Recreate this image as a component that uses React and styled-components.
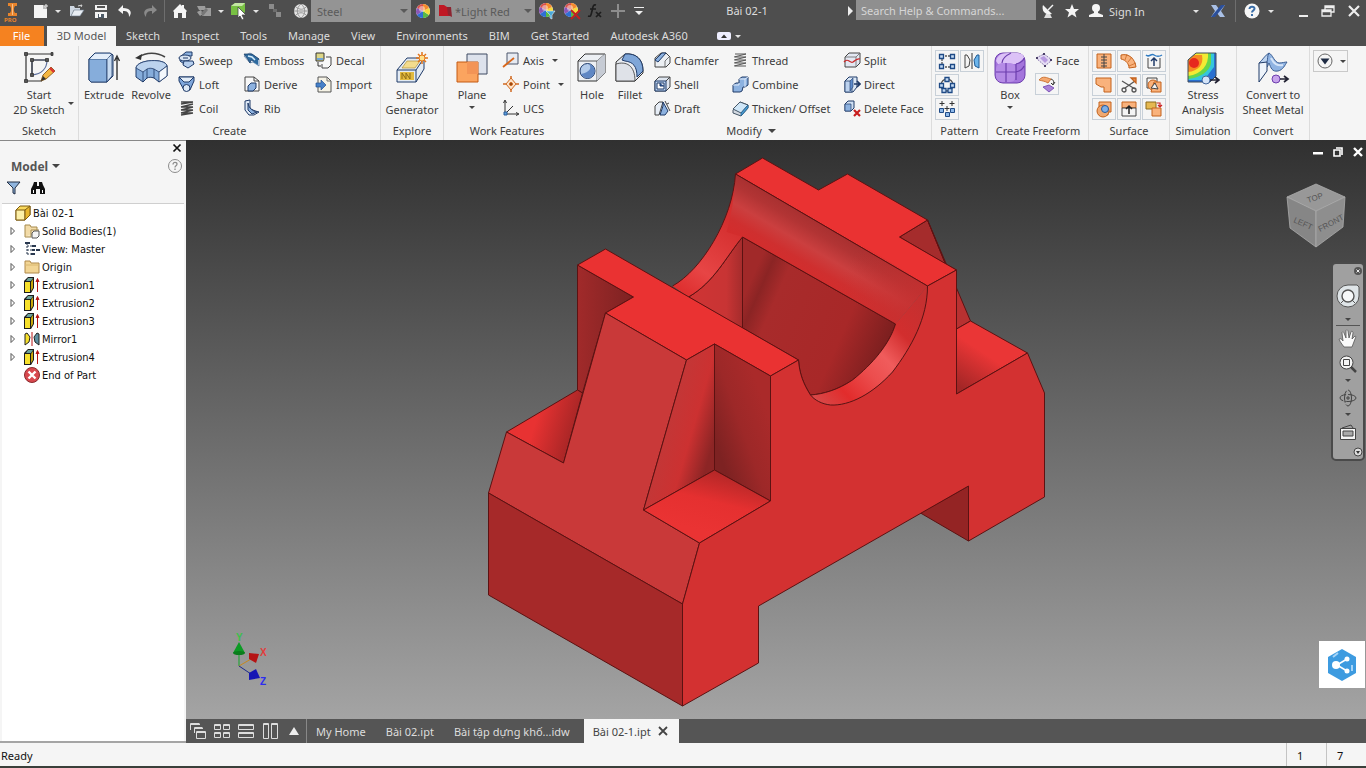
import React from 'react'
import styled, { createGlobalStyle } from 'styled-components'

const GlobalStyle = createGlobalStyle`
  * { box-sizing: border-box; }
  body {
    margin: 0;
    background: #f5f5f5;
    color: #3c3c3c;
    font-family: 'Noto Sans', sans-serif;
    font-size: 11px;
  }
  button, select, input { font: inherit; color: inherit; }
  button { padding: 0; border: 0; background: none; }
  svg { display: block; flex: none; }
  ul { margin: 0; padding: 0; list-style: none; }
`

const navy = '#1f3a68'
const blue = '#8db2e0'
const pale = '#d9e5f3'
const orange = '#f9b27c'
const rust = '#c4621c'

const ballArt = (
  <g>
    <circle cx='8' cy='8' r='7' fill='#fff' />
    <path d='M8 8V1A7 7 0 0 0 2 5z' fill='#d8504a' /><path d='M8 8L2 5a7 7 0 0 0 0 7z' fill='#8b57b5' />
    <path d='M8 8L2 12a7 7 0 0 0 6 3z' fill='#2f6fd6' /><path d='M8 8v7a7 7 0 0 0 6-3z' fill='#58b947' />
    <path d='M8 8l6 4a7 7 0 0 0 0-7z' fill='#f4dc3c' /><path d='M8 8l6-3a7 7 0 0 0-6-4z' fill='#f58a2c' />
    <circle cx='7' cy='6' r='3' fill='#fff' opacity='.45' />
  </g>
)

/* name: [width, height, drawing] */
const icons = {
  logo: [16, 17, <g>
    <path d='M4 3h9v3h-2l-1 2v3l1 2h2v3H4v-3h2l1-2V8L6 6H4z' fill='#e8842c' />
    <path d='M8 4h1v11H8z' fill='#f8c08a' />
  </g>],
  doc: [16, 16, <g><path d='M1 2h9l4 4v9H1z' fill='#f4f4f4' /><path d='M10 2v4h4' fill='#bbb' /><path d='M13 1v4m2-2h-4' stroke='#eee' /></g>],
  open: [16, 16, <g><path d='M1 3h4l1 2h5v2H5l-3 6H1z' fill='#cfd8e2' /><path d='M5 7h10l-4 6H2z' fill='#e9eef4' stroke='#6b7a8c' strokeWidth='.6' /><path d='M9 3l4-1-1 2' fill='none' stroke='#ddd' /></g>],
  save: [16, 16, <g><path d='M2 2h12v13H2z' fill='#f2f2f2' /><path d='M4 3h8v2H4zM2 7h12v2H2z' fill='#555' /><path d='M5 11h6v4H5z' fill='#4d5a66' /><path d='M6 11h2v3H6z' fill='#fff' /></g>],
  undo: [16, 16, <path d='M6 2L1 7l5 4V8c4 0 6 1 6 6 4-5 1-9-6-9z' fill='#f4f4f4' />],
  redo: [16, 16, <path d='M10 2l5 5-5 4V8c-4 0-6 1-6 6-4-5-1-9 6-9z' fill='#8a8a8a' />],
  home: [16, 16, <path d='M8 1L1 8l1 1v6h4v-5h4v5h4V9l1-1-3-3V2h-2v1z' fill='#f4f4f4' />],
  link: [16, 16, <g fill='#9c9c9c'><path d='M1 3h8l1 4H3z' /><path d='M1 9l4-2 2 4-3 2z' /><path d='M9 5h6v8H6l3-4z' /><path d='M5 10l5-5 2 2-5 6z' fill='#777' /></g>],
  cube: [18, 18, <g><path d='M1 4l4-3h10v9l-3 3H1z' fill='#78c043' /><path d='M1 4l4-3h10l-3 3z' fill='#c4e6a4' /><path d='M8 5l8 8-4 0 2 4-2 1-2-4-2 2z' fill='#fff' stroke='#444' strokeWidth='.8' /></g>],
  dots: [16, 16, <g fill='#8b8b8b'><path d='M2 1h5v5H2zM9 9h5v5H9z' /><path d='M6 6h4v3H6z' fill='#6d6d6d' /></g>],
  sphere: [16, 16, <g><circle cx='8' cy='8' r='7' fill='#e4e4e4' /><path d='M3 4c4 3 7 3 10 0M1 8h14M3 12c3-3 7-3 10 0M8 1c-5 4-5 10 0 14M8 1c5 4 5 10 0 14' fill='none' stroke='#8e8e8e' strokeWidth='.9' /></g>],
  ball: [16, 16, ballArt],
  ballfilter: [18, 18, <g>{ballArt}<path d='M8 9h9l-3 4v4l-2-1v-3z' fill='#49a8d8' stroke='#e8f4fb' strokeWidth='.6' /></g>],
  ballclear: [18, 18, <g>{ballArt}<path d='M8 8l9 9M17 8l-9 9' stroke='#c42020' strokeWidth='1.800' /></g>],
  fx: [18, 16, <g fill='none' stroke='#1d1d1d' strokeWidth='1.700'><path d='M10 2C7 1 7 4 6 8s-1 6-4 5M4 6h6' /><path d='M10 9l5 5M15 9l-5 5' /></g>],
  plus: [16, 16, <path d='M8 1v14M1 8h14' stroke='#8d8d8d' strokeWidth='2' />],
  more: [12, 12, <path d='M1 2h10v1H1zM2 6h8l-4 4z' fill='#f0f0f0' />],
  swatch: [16, 16, <g><path d='M1 2h5l3 2h4v9H8l-3 0H1z' fill='#c01824' /><path d='M9 4h4l1 10-4-2z' fill='#8d2430' /></g>],
  right: [6, 10, <path d='M0 0l5 5-5 5z' fill='#eee' />],
  dish: [16, 16, <g><path d='M3 2l9 9C6 13 1 8 3 2z' fill='#f4f4f4' /><path d='M8 7l5-5' stroke='#f4f4f4' strokeWidth='1.500' /><path d='M6 11l-2 4h8l-2-4z' fill='#ddd' /></g>],
  star: [16, 16, <path d='M8 1l2 5h5l-4 3.500 1.500 5L8 11.500 3.500 14.500 5 9.500 1 6h5z' fill='#f4f4f4' />],
  user: [16, 16, <g fill='#f4f4f4'><circle cx='8' cy='5' r='4' /><path d='M6 8h4v2l5 2v2H1v-2l5-2z' /></g>],
  exchange: [16, 14, <g><path d='M1 1h5l3 4 3-4h3l-4 6 4 6h-5l-3-4-3 4H1l4-6z' fill='#a9c0e6' /><path d='M1 13h4L15 1h-4z' fill='#2b4f9a' /></g>],
  help: [16, 16, <g><circle cx='8' cy='8' r='7.500' fill='#f7f7f7' /><path d='M5.500 6c0-3 5-3 5-.5 0 2-2.500 2-2.500 4M8 11v2' fill='none' stroke='#3a6ea8' strokeWidth='2' /></g>],
  min: [14, 14, <path d='M3 11h9v2H3z' fill='#eee' />],
  restore: [14, 14, <path d='M4 6V2h9v6h-3M1 6h9v6H1zM1 7.500h9M4 3.500h9' fill='none' stroke='#eee' strokeWidth='1.300' />],
  close: [14, 14, <path d='M2 2l10 10M12 2L2 12' stroke='#eee' strokeWidth='2.200' />],
  pill: [14, 8, <g><rect width='14' height='8' rx='2' fill='#eef' /><path d='M4 6l3-3.500L10 6z' fill='#333' /></g>],

  sketch: [34, 34, <g fill='none' stroke='#333' strokeWidth='1.200'>
    <path d='M4 30V3h26M4 30h16' /><path d='M10 24V9h15c0 8-5 14-15 15z' stroke='#5c6f9e' /><path d='M10 9v14M10 9h14' />
    <path d='M2.500 1.500h3v3h-3zM29 1.500h2v3h-2zM2.500 28.500h3v3h-3zM8.500 7.500h3v3h-3zM23.500 7.500h3v3h-3zM8.500 22.500h3v3h-3z' fill='#555' stroke='#333' strokeWidth='.8' />
    <path d='M19 30l2-6 8-8 4 4-9 8z' fill='#f4b642' stroke='#8a5a1c' strokeWidth='.9' /><path d='M28 17l4 4' stroke='#d33' strokeWidth='2.400' /><path d='M19 30l2-5 3 3z' fill='#333' stroke='none' />
  </g>],
  extrude: [34, 34, <g stroke={navy}>
    <path d='M2 8l6-6h15l3 2v21l-6 6H4l-2-2z' fill='#b9d1ee' /><path d='M2 8h18v23H4l-2-2z' fill='#86addb' strokeWidth='.8' /><path d='M20 8l5-5v22l-5 6z' fill='#c9dcf2' strokeWidth='.8' /><path d='M3 8l5-5h16l-4 5z' fill='#e4eefa' stroke='none' />
    <path d='M30 29V7M27.500 10L30 5l2.500 5' fill='none' stroke='#333' strokeWidth='1.400' />
  </g>],
  revolve: [34, 34, <g>
    <path d='M5 6C12 1 23 1 31 6' fill='none' stroke='#444' strokeWidth='1.700' /><path d='M1 7l7-4-1 6z' fill='#333' />
    <path d='M2 17c1-9 30-10 31-2v10l-8 6-5-4c-3-1-5-1-7 0l-4 4-7-5z' fill='#86addb' stroke={navy} /><path d='M2 17c1-9 30-10 31-2l-8 6-5-3c-3-1-5-1-7 0l-4 3z' fill='#bcd3ee' stroke={navy} strokeWidth='.8' /><path d='M25 21v10l8-6V15z' fill='#f4f8fc' stroke={navy} strokeWidth='.8' /><path d='M9 21v10M13 18v9M20 18v9' stroke={navy} strokeWidth='.8' />
  </g>],
  shape: [34, 34, <g fill='none' stroke={navy}>
    <path d='M2 19l10-12h17v11L21 31H2z' fill='#e3ebf4' /><path d='M2 19h19v12M21 19l8-12' /><path d='M5 21h14v8H5z' fill='#e2ba3f' stroke='none' /><path d='M7 28v-6l4 6v-6l4 6v-6' stroke='#8d6b14' /><path d='M12 10h13l-5 7H7z' fill='#f3dc8e' stroke='#b0903a' strokeWidth='.7' />
    <path d='M27 1v12M21 7h12M23 3l8 8M31 3l-8 8' stroke='#e2761b' strokeWidth='1.500' /><circle cx='27' cy='7' r='3' fill='#ffe08a' stroke='#e2761b' />
  </g>],
  plane: [34, 34, <g><path d='M12 3h20v20H12z' fill='#dde2ec' stroke='#3f4a62' /><path d='M2 11h21v20H2z' fill='#fba45f' stroke='#c45a12' /><path d='M12 11h11v12H12z' fill='#f39456' /></g>],
  hole: [34, 34, <g stroke='#333'><path d='M3 10l7-7h20v19l-8 8H3z' fill='#eceff3' /><path d='M3 10h19v20M22 10l8-7' fill='none' strokeWidth='.8' /><path d='M22 10l8-7v19l-8 8z' fill='#c6cbd4' stroke='none' /><circle cx='12.500' cy='20' r='7.500' fill='#b3cbea' stroke={navy} /><path d='M14 13c3 4 1 8-8 10 3 5 10 6 13 0 2-5-1-9-5-10z' fill='#5f87c4' stroke='none' /></g>],
  fillet: [34, 34, <g stroke='#333'><path d='M3 30V11l9-8c11-1 18 5 18 17v2l-8 8z' fill='#e8ebf0' /><path d='M12 3c11-1 18 5 18 17l-6 6C24 15 20 11 12 10l-3-1z' fill='#7fa6d8' stroke={navy} /><path d='M3 30V13c10-3 19 1 19 17z' fill='#dfe2e8' strokeWidth='.8' /></g>],
  box: [34, 34, <g><rect x='2' y='2' width='30' height='30' rx='8' fill='#a475dc' stroke='#6d3fae' /><path d='M3 10c2-8 8-8 14-8s14-1 14 5l-7 6H5z' fill='#dcc2f7' /><rect x='3' y='12' width='20' height='19' rx='6' fill='#b58be6' /><path d='M13 12v19M3 21h20c4-1 7-3 8-6M9 12c0-4 3-7 9-10M23 13c5-1 8-4 8-6M23 13v16' fill='none' stroke='#6d3fae' strokeWidth='1.200' /></g>],
  stress: [34, 34, <g>
    <path d='M2 9l8-7h20v23l-6 6H2z' fill='#2a6fd0' /><path d='M2 9l8-7h18v14L18 29H2z' fill='#35c6dc' /><path d='M2 9l8-7h15v10C24 20 14 27 2 28z' fill='#67d64a' /><path d='M2 9l8-7h12c1 12-6 21-20 23z' fill='#f3ea33' /><path d='M2 9l6-5h8c2 10-4 16-14 17z' fill='#f78a22' /><ellipse cx='8' cy='12' rx='5' ry='5' fill='#e6281e' />
    <path d='M2 9l8-7h20v23l-6 6H2z' fill='none' stroke='#3d4b5c' /><circle cx='20' cy='29' r='4' fill='#d5e4f8' stroke='#42669c' /><path d='M24 29h8M29 26l4 3-4 3' fill='none' stroke='#223' strokeWidth='1.700' />
  </g>],
  sheet: [34, 34, <g><path d='M13 2c4 2 5 9 10 10 3 0 6-1 8-1-2 3-4 8-9 9-6 1-7-3-9-8-1 2-1 3-2 4l-3-7z' fill='#8fb3e2' stroke='#3c5f94' /><path d='M3 12C6 10 9 4 13 2c-2 3-1 6-2 9' fill='#bdd4f0' stroke='#3c5f94' /><path d='M3 12l8-1v9L3 31z' fill='#eef4fb' stroke={navy} /><path d='M15 7c3 6 6 8 12 7' fill='none' stroke='#d4e4f8' strokeWidth='2' /><circle cx='20' cy='28' r='4' fill='#c7a3ec' stroke='#6d3fae' /><path d='M24 28h7M28 25l4 3-4 3' fill='none' stroke='#223' strokeWidth='1.700' /></g>],

  sweep: [18, 18, <g stroke={navy}><path d='M8 1h6v4H8v5h3v3H6l-4-3V6z' fill={blue} /><ellipse cx='7' cy='7' rx='6' ry='3' fill={pale} /><path d='M6 10h9l1 3-6 4-5-3z' fill='#b7cfee' /><path d='M5 7h5' /></g>],
  loft: [18, 18, <g stroke={navy}><path d='M1 2h15v4l-4 9H6L1 6z' fill='#7ea6db' /><path d='M1 2h15l-5 5H6z' fill='#e3edf8' /><circle cx='8.500' cy='13' r='3.500' fill='#dce8f6' /></g>],
  coil: [18, 18, <path d='M3 3h12M3 5l12-2M3 8l12-3M3 8h12M3 11l12-3M3 11h12M3 14l12-3M3 14h12M3 16l12-2' stroke='#444' fill='none' strokeWidth='1.300' />],
  emboss: [18, 18, <g><path d='M1 5l6-3 9 6v7l-6-4-3 1z' fill='#dbe9f7' stroke='#51759e' strokeWidth='.7' /><path d='M1 3h8l7 5-4 3-4-2-1 3-3-5z' fill='#2d6a9f' stroke='#173a63' strokeWidth='.7' /><path d='M5 5l4 1 3 3' fill='none' stroke='#d4ecfa' strokeWidth='1.500' /><path d='M10 11l5-3v6z' fill='#2d6a9f' /></g>],
  derive: [18, 18, <g stroke='#444'><path d='M2 2h9l5 4v10H2z' fill='#f8f8f8' /><path d='M11 2v4h5' fill='none' /><path d='M5 11l3-3h5v5l-3 3H5z' fill={blue} stroke={navy} /></g>],
  rib: [18, 18, <g stroke={navy}><path d='M2 2l5-1v8c2 2 5 3 9 4l-5 3H6l-4-5z' fill='#dfeaf7' /><path d='M5 4c1 6 5 8 9 9l-5 2-4-4z' fill={blue} /></g>],
  decal: [18, 18, <g><path d='M1 2h8v8H1z' fill='#dcd687' stroke='#333' /><path d='M2 7h6v2H2z' fill='#6fa5d8' /><path d='M11 6h5v8l-3 3H7v-4' fill='#f8f8f8' stroke='#444' /><path d='M3 11v4h3' fill='none' stroke='#333' /></g>],
  import: [18, 18, <g><path d='M3 2h9l4 4v11H3z' fill='#f6f3e6' stroke='#555' /><path d='M12 2v4h4' fill='none' stroke='#777' /><path d='M1 8h5V5l5 5-5 5v-3H1z' fill='#4680c8' stroke='#24508c' strokeWidth='.7' /></g>],
  axis: [18, 18, <g><path d='M5 2h11v11H5z' fill='#e6eaf1' stroke='#4c566c' /><path d='M1 16L12 7' stroke='#d8661a' strokeWidth='1.800' /></g>],
  point: [18, 18, <g fill='none' stroke='#cf6a22'><path d='M9 3l5 6-5 6-5-6z' fill='#fde3c8' /><path d='M9 1v3M9 14v3M1 9h3M14 9h3' strokeWidth='1.500' /><circle cx='9' cy='9' r='1.500' fill='#8a3c0a' /></g>],
  ucs: [18, 18, <g fill='none' stroke='#333'><path d='M3 15V2M3 15h13M3 15l8-8' /><path d='M1.500 4L3 1l1.500 3M14 13.500l3 1.500-3 1.500' /><path d='M2 13h3v3H2z' fill='#5da1e0' stroke='#2a5d99' /></g>],
  chamfer: [18, 18, <g stroke='#444'><path d='M2 15V7l6-5h5l4 4v6l-4 4H2z' fill='#eceff3' /><path d='M2 9l7-7h4l-8 9z' fill={blue} stroke={navy} /><path d='M12 16v-6l4-4' fill='none' strokeWidth='.7' /></g>],
  shell: [18, 18, <g stroke='#444'><path d='M2 6l4-4h11v10l-4 4H2z' fill='#dfe6f0' /><path d='M2 6h11v10H2z' fill='#bcd2ee' stroke={navy} /><path d='M4 8h7v6H4z' fill='#fff' stroke={navy} /><path d='M7 8v3h4' fill='#2f5ca0' stroke={navy} /><path d='M13 6l4-4' /></g>],
  draft: [18, 18, <g stroke='#444'><path d='M2 16V7l4-4h4l-4 13z' fill='#e6edf6' /><path d='M10 3l5 9-3 4H7l3-9z' fill={blue} stroke={navy} /><path d='M12 2l5 10M16 4l-2 1' fill='none' /></g>],
  thread: [18, 18, <path d='M4 3h11M15 3L3 6M4 6h11M15 6L3 9M4 9h11M15 9L3 12M4 12h11M15 12L3 15M4 15h11' stroke='#555' fill='none' />],
  combine: [18, 18, <g stroke={navy}><path d='M8 4l3-2h6v8l-3 2h-2l-1 4-2 1H2V10l3-2h3z' fill={blue} /><path d='M8 4h6v8M2 10h6v-2M14 4l3-2' fill='none' stroke='#dfeafa' /></g>],
  thicken: [18, 18, <g stroke='#456'><path d='M2 11l7-8 8 3v3l-7 8-8-3z' fill='#d4dae2' /><path d='M2 10l7-7 8 3-7 8z' fill='#cfe6f7' /><path d='M10 14l7-8v3l-7 8z' fill='#4a9bd0' stroke='#1f5f90' strokeWidth='.7' /></g>],
  split: [18, 18, <g><path d='M2 6l4-4h11v10l-4 4H2z' fill='#e3e8f2' stroke='#444' /><path d='M2 6h11l4-4M13 6v10' fill='none' stroke='#666' strokeWidth='.8' /><path d='M1 11c4-5 6 2 9 0s4-4 7-3' fill='none' stroke='#c92a2a' strokeWidth='1.300' /></g>],
  direct: [18, 18, <g stroke={navy}><path d='M2 6l4-4h8v10l-4 5H2z' fill='#dce8f6' /><path d='M2 6h7v11H2z' fill='#bcd2ee' strokeWidth='.8' /><path d='M7 6l3-3v9l-3 4z' fill='#5d8bcb' strokeWidth='.6' /><path d='M11 9h6M14 6l3 3-3 3' fill='none' strokeWidth='1.600' /></g>],
  delface: [18, 18, <g><path d='M2 5l3-3h6v7l-3 3H2z' fill='#cfdff2' stroke={navy} /><path d='M2 5h6v7H2z' fill={blue} stroke={navy} strokeWidth='.7' /><path d='M11 11l6 6M17 11l-6 6' stroke='#c81e1e' strokeWidth='2.200' /></g>],
  face: [18, 18, <g><path d='M1 7l8-4 8 6-7 6z' fill='#e4dcf3' stroke='#8d7bb0' strokeDasharray='2 1' /><path d='M5 7l4-2 4 4-3 3z' fill='#b79ae0' /><path d='M1 6h2v2H1zM8 2h2v2H8zM15 8h2v2h-2zM9 14h2v2H9z' fill='#4b4068' /></g>],
  rect: [18, 18, <g fill='#c3d9f2' stroke='#1e4a86' strokeWidth='1.300'><path d='M4 4h11M4 4v11M4 15h11' strokeDasharray='2 1' stroke='#555' fill='none' /><path d='M1.500 2.500h4v4h-4zM12.500 2.500h4v4h-4zM1.500 12.500h4v4h-4zM12.500 12.500h4v4h-4z' /></g>],
  mirror: [18, 18, <g><path d='M2 3h2l3 5-1 6-4 2z' fill='#f4f4f4' stroke='#444' /><path d='M16 3h-2l-3 5 1 6 4 2z' fill='#6cb5ec' stroke='#1e5a94' /><path d='M9 1v16' stroke='#333' /></g>],
  circ: [18, 18, <g fill='#c3d9f2' stroke='#1e4a86' strokeWidth='1.300'><circle cx='9' cy='9' r='6' fill='none' stroke='#555' /><path d='M7 1.500h4v4H7zM4 12.500h4v4H4zM10 12.500h4v4h-4zM1.500 7.500h4v4h-4zM12.500 7.500h4v4h-4z' /></g>],
  sketchpat: [18, 18, <g stroke='#333' fill='none'><path d='M4 1v5M1.500 3.500h5M9 6v5M6.500 8.500h5M14 1v5M11.500 3.500h5' /><path d='M1.500 8.500h4v4h-4zM7.500 12.500h4v4h-4zM12.500 8.500h4v4h-4z' fill='#8db8ea' stroke='#1e4a86' /></g>],
  convertface: [18, 18, <g><path d='M1 5c4-5 8-2 12-1l-3 4c-3-2-6-2-9-3z' fill='#f4a870' stroke={rust} strokeWidth='.8' /><path d='M5 12l6-2 5 3-5 4z' fill='#a983d8' stroke='#6d3fae' strokeWidth='.8' /><path d='M13 4c3 1 3 3 2 5M13 8l2 2 2-3' fill='none' stroke='#333' /></g>],
  stitch: [18, 18, <g><path d='M2 2h14v14H2z' fill={orange} stroke={rust} /><path d='M9 2v14M6 5h6M6 8h6M6 11h6M6 14h6' stroke='#444' /></g>],
  ruled: [18, 18, <g fill={orange} stroke={rust}><path d='M1 7V3c8-2 14 4 15 12l-7 1C9 12 6 8 1 7z' /><path d='M7 2L5 8M12 5L8 10M16 11l-7 3' fill='none' strokeWidth='.7' /></g>],
  patch: [18, 18, <g fill='none'><path d='M3 6v10h12V6' fill='#f4f4f4' stroke='#444' /><path d='M1 3c3 3 5-2 8 0s5 2 8 0' stroke='#2f7cc4' strokeWidth='1.500' /><path d='M9 14V6M6 9l3-3 3 3' stroke={navy} strokeWidth='1.500' /></g>],
  sculpt: [18, 18, <path d='M1 2h15v14H9v-5H6L1 8z' fill={orange} stroke={rust} />],
  trim: [18, 18, <g fill='none' stroke='#555' strokeWidth='1.300'><path d='M2 5l13 8M15 5L5 12' /><circle cx='4' cy='14' r='2' /><circle cx='14' cy='14' r='2' /><path d='M11 2h5v5z' fill='#e88d4f' stroke={rust} /></g>],
  extend: [18, 18, <g fill={orange} stroke='#444'><path d='M2 2h10v10H2z' fill='#f4f4f4' /><circle cx='8' cy='9' r='5' stroke={rust} /><path d='M9 6h7v10H6z' stroke={rust} /><path d='M6 12l4-5 3 6z' fill='#f4f4f4' /></g>],
  replace: [18, 18, <g><path d='M4 2h12v10h-3v3H4z' fill={orange} stroke={rust} /><circle cx='8' cy='11' r='6' fill='#f0a870' stroke={rust} /><circle cx='10' cy='9' r='3.500' fill='#7fb0e8' stroke='#285a9c' /></g>],
  thickface: [18, 18, <g><path d='M2 2h14v6H2z' fill={orange} stroke={rust} /><path d='M2 8h14v8H2z' fill='#f4f4f4' stroke='#444' /><path d='M9 14V6M6 9l3-3 3 3' fill='none' stroke='#222' strokeWidth='1.500' /></g>],
  copyobj: [18, 18, <g><path d='M1 2h10v7H1z' fill='#e5b850' stroke='#8a6a1c' /><path d='M7 8h9v8H7z' fill={orange} stroke={rust} /><path d='M12 3h3v4M13 5l2 2 2-2' fill='none' stroke='#cc2222' strokeWidth='1.200' /></g>],
  select: [18, 18, <g><circle cx='9' cy='9' r='7' fill='#f5f5f5' stroke='#666' /><path d='M4.500 6.500h9L9 12.500z' fill='#1f2c44' /></g>],

  filter: [16, 16, <path d='M1 2h13L9 8v6l-2-1V8z' fill='#8fb4dd' stroke='#222f45' />],
  find: [16, 16, <g fill='#111'><path d='M4 2h3v4h2V2h3l1 3 2 4v5H10v-5H6v5H1V9l2-4z' /><path d='M3 10h1v3H3zM12 10h1v3h-1z' fill='#fff' /></g>],
  qmark: [14, 14, <g fill='none' stroke='#8c8c8c'><circle cx='7' cy='7' r='6.500' /><path d='M5 5.500c0-3 4-2.500 4-.5S7 6.500 7 8.500M7 9.500v1.500' strokeWidth='1.300' /></g>],
  part: [16, 16, <g stroke='#7d5b10'><path d='M1 5l4-4h10v9l-5 5H1z' fill='#f9d95c' /><path d='M1 5h9v10H1z' fill='#fdf0a8' /><path d='M10 5l5-4v9l-5 5z' fill='#e8b62e' /></g>],
  bodies: [16, 16, <g><path d='M1 14V2h5l1 2h6v6' fill='#f2dba8' stroke='#a68a4c' /><path d='M1 14h6V7h8' fill='#f6e7c4' stroke='#a68a4c' /><path d='M8 10l2-2h5v5l-2 2H8z' fill='#f4f4f4' stroke='#555' /></g>],
  view: [16, 16, <g fill='none' stroke='#29384f'><path d='M3 2v11M3 5h5M3 9h5M3 13h4' strokeDasharray='2 1' /><path d='M1 2h5M8 5h4M8 9h3M7 13h4M12 9h4' strokeWidth='2' /></g>],
  folder: [16, 16, <g><path d='M1 14V2h5l1 2h8v10z' fill='#f2d595' stroke='#b0894a' /><path d='M1 6h14' stroke='#d9b870' /></g>],
  extrusion: [16, 16, <g><path d='M0 4l4-4h6v11l-3 5H0z' fill='#1d1d1d' /><path d='M1 5h5v10H1z' fill='#f7e02c' /><path d='M2 4l2-3h5L7 4z' fill='#6aa09a' /><path d='M7 5l2-3v9l-2 3z' fill='#c9a70c' /><path d='M13.500 15V3M12 5l1.500-3.500L15 5' fill='#b81414' stroke='#b81414' /></g>],
  mirrorf: [16, 16, <g stroke='#222'><path d='M1 14V3l2-1 3 4-1 5z' fill='#f7e02c' /><path d='M15 14V3l-2-1-3 4 1 5z' fill='#5d8ea0' /><path d='M8 1v14' stroke='#b81414' /></g>],
  end: [16, 16, <g><circle cx='8' cy='8' r='7.500' fill='#d8484e' stroke='#8a2a2e' /><path d='M4.500 4.500l7 7M11.500 4.500l-7 7' stroke='#fff' strokeWidth='2.400' /></g>],

  cascade: [18, 18, <path d='M1.500 8V1.500h9M5.500 11V5.500h8M7.500 9.500h9v7h-9zM7 10.500h10M2 2.500h9M6 6.500h8' fill='none' stroke='#ddd' />],
  tiles: [18, 18, <path d='M1.500 2.500h6v5h-6zM10.500 2.500h6v5h-6zM1.500 10.500h6v5h-6zM10.500 10.500h6v5h-6zM1 3.500h7M10 3.500h7M1 11.500h7M10 11.500h7' fill='none' stroke='#ddd' />],
  rowsplit: [18, 18, <path d='M1.500 2.500h15v5h-15zM1.500 10.500h15v5h-15zM1 3.500h16M1 11.500h16' fill='none' stroke='#ddd' />],
  colsplit: [18, 18, <path d='M2.500 1.500h5v15h-5zM10.500 1.500h6v15h-6zM2 2.500h6M10 2.500h7' fill='none' stroke='#ddd' />],
  up: [12, 10, <path d='M1 9l5-8 5 8z' fill='#eee' />],

  wheel: [26, 26, <g><path d='M13 2h9l2 2v9a11 11 0 1 1-11-11z' fill='#dfe5e8' stroke='#555' /><circle cx='13' cy='13' r='6' fill='#f6f8f9' stroke='#555' strokeWidth='1.400' /><path d='M6 20l3-3M20 20l-3-3' stroke='#555' /></g>],
  hand: [20, 20, <path d='M6 18C4 15 2 13 1 10c1-1 3 0 4 2L4 4c0-2 2-1 2 0l2 5V2c0-2 2-1 2 0l1 7 2-6c1-2 2 0 2 1l-1 6 3-3c1 0 1 1 0 3l-3 8z' fill='#fafafa' stroke='#555' strokeWidth='.8' />],
  zoomwin: [20, 20, <g><path d='M12 12l6 6' stroke='#444' strokeWidth='2.500' /><circle cx='8.500' cy='8.500' r='6.500' fill='#f4f4f4' stroke='#444' /><path d='M5.500 5.500h6v6h-6z' fill='none' stroke='#444' /></g>],
  orbit: [20, 20, <g fill='none' stroke='#444'><ellipse cx='10' cy='10' rx='8' ry='3.500' strokeDasharray='12 2' /><ellipse cx='10' cy='10' rx='3.500' ry='8' strokeDasharray='12 2' /><path d='M8 10h4M10 8v4' /></g>],
  look: [20, 20, <g><path d='M4 5l9-3 2 3' fill='none' stroke='#444' /><path d='M2.500 5.500h15v11h-15z' fill='#f4f4f4' stroke='#444' /><path d='M5 8h10v5H5z' fill='#aaa' stroke='#444' /></g>],
  navclose: [10, 10, <g><circle cx='5' cy='5' r='4' fill='#555' /><path d='M3.500 3.500l3 3M6.500 3.500l-3 3' stroke='#eee' /></g>],
  navmore: [10, 10, <g><circle cx='5' cy='5' r='4' fill='#ddd' stroke='#444' /><path d='M3 4h4L5 7z' fill='#333' /></g>],
  share: [32, 34, <g><path d='M16 1l14 8v16l-14 8-14-8V9z' fill='#3d9be0' /><path d='M11 17l10-6M11 17l10 6' stroke='#fff' strokeWidth='1.500' /><circle cx='10' cy='17' r='4' fill='#fff' /><circle cx='21' cy='11' r='2.500' fill='#fff' /><circle cx='21' cy='23' r='2.500' fill='#fff' /><path d='M7 9l5-4M26 17v6' stroke='#a6d4f7' strokeWidth='2' /></g>]
}

function Icon ({ name }) {
  const [w, h, art] = icons[name]
  return <svg width={w} height={h} viewBox={`0 0 ${w} ${h}`} aria-hidden='true'>{art}</svg>
}

const App = () => (
  <Window>
    <GlobalStyle />
    <TitleBar />
    <MenuTabs />
    <Ribbon />
    <Workspace>
      <Browser />
      <Documents>
        <Viewport />
        <DocumentTabs />
      </Documents>
    </Workspace>
    <StatusBar>
      <StatusText>Ready</StatusText>
      <StatusCell>1</StatusCell>
      <StatusCell>7</StatusCell>
    </StatusBar>
  </Window>
)

function Tool ({ name, w, label }) {
  return <Slot w={w} aria-label={label || name} title={label || name}><Icon name={name} /></Slot>
}

function DropArrow ({ w = 10 }) {
  return <Slot w={w} aria-label='More options'><Caret light /></Slot>
}

function TitleBar () {
  return (
    <Title>
      <Logo aria-label='Inventor'><Icon name='logo' /><Pro>PRO</Pro></Logo>
      <Tool name='doc' w={25} label='New' />
      <DropArrow />
      <Tool name='open' w={28} label='Open' />
      <Tool name='save' w={20} label='Save' />
      <Tool name='undo' w={28} label='Undo' />
      <Tool name='redo' w={21} label='Redo' />
      <BarRule />
      <Tool name='home' w={24} label='Home' />
      <Tool name='link' w={24} label='Update' />
      <DropArrow />
      <Tool name='cube' w={26} label='Select' />
      <DropArrow w={8} />
      <Tool name='dots' w={30} label='Components' />
      <Tool name='sphere' w={21} label='Material' />
      <Picker>
        <PickerSelect aria-label='Material'><option>Steel</option></PickerSelect>
        <PickerCaret />
      </Picker>
      <Tool name='ball' w={24} label='Appearance' />
      <Picker>
        <PickerSwatch><Icon name='swatch' /></PickerSwatch>
        <PickerSelect aria-label='Appearance' swatch><option>*Light Red</option></PickerSelect>
        <PickerCaret />
      </Picker>
      <Tool name='ballfilter' w={24} label='Adjust' />
      <Tool name='ballclear' w={25} label='Clear' />
      <Tool name='fx' w={22} label='Parameters' />
      <Tool name='plus' w={24} label='Add' />
      <Tool name='more' w={18} label='Customize' />
      <FileName>Bài 02-1</FileName>
      <Tool name='right' w={10} label='Expand search' />
      <Search aria-label='Search' placeholder='Search Help & Commands...' />
      <Tool name='dish' w={24} label='Communication Center' />
      <Tool name='star' w={23} label='Favorites' />
      <Tool name='user' w={25} label='Account' />
      <SignIn>Sign In</SignIn>
      <DropArrow />
      <Tool name='exchange' w={34} label='Exchange' />
      <BarRule thin />
      <Tool name='help' w={32} label='Help' />
      <DropArrow w={6} />
      <WindowButtons>
        <Tool name='min' w={22} label='Minimize' />
        <Tool name='restore' w={27} label='Restore' />
        <Tool name='close' w={25} label='Close' />
      </WindowButtons>
    </Title>
  )
}

const menu = ['Sketch', 'Inspect', 'Tools', 'Manage', 'View', 'Environments', 'BIM', 'Get Started', 'Autodesk A360']

function MenuTabs () {
  return (
    <Tabs>
      <FileTab>File</FileTab>
      <ActiveTab>3D Model</ActiveTab>
      {menu.map(name => <Tab key={name}>{name}</Tab>)}
      <CollapseButton aria-label='Collapse ribbon'><Icon name='pill' /><Caret light /></CollapseButton>
    </Tabs>
  )
}

function Big ({ name, w, lines, drop }) {
  return (
    <BigButton w={w}>
      <BigIcon><Icon name={name} /></BigIcon>
      {lines.map(line => <span key={line}>{line}</span>)}
      {drop && <BigCaret />}
    </BigButton>
  )
}

function Column ({ w, items, drops = [] }) {
  return (
    <ToolColumn w={w}>
      {items.map(([name, label]) => (
        <SmallButton key={name}>
          <Icon name={name} />{label}
          {drops.includes(name) && <SmallCaret />}
        </SmallButton>
      ))}
    </ToolColumn>
  )
}

function Grid ({ columns, names }) {
  return (
    <IconGrid columns={columns}>
      {names.map((name, i) => name ? <Framed key={name} aria-label={name}><Icon name={name} /></Framed> : <span key={i} />)}
    </IconGrid>
  )
}

function Group ({ w, title, more, start, children }) {
  return (
    <RibbonGroup w={w}>
      <GroupBody start={start}>{children}</GroupBody>
      <GroupTitle>{title}{more && <Caret big />}</GroupTitle>
    </RibbonGroup>
  )
}

function Ribbon () {
  return (
    <RibbonBar>
      <Group w={79} title='Sketch'>
        <Big name='sketch' w={78} lines={['Start', '2D Sketch']} />
        <SketchCaret />
      </Group>
      <Group w={302} title='Create' start={1}>
        <Big name='extrude' w={48} lines={['Extrude']} />
        <Big name='revolve' w={46} lines={['Revolve']} />
        <Column w={65} items={[['sweep', 'Sweep'], ['loft', 'Loft'], ['coil', 'Coil']]} />
        <Column w={72} items={[['emboss', 'Emboss'], ['derive', 'Derive'], ['rib', 'Rib']]} />
        <Column w={66} items={[['decal', 'Decal'], ['import', 'Import']]} />
      </Group>
      <Group w={63} title='Explore'>
        <Big name='shape' w={62} lines={['Shape', 'Generator']} />
      </Group>
      <Group w={127} title='Work Features' start={2}>
        <Big name='plane' w={52} lines={['Plane']} drop />
        <Column w={70} items={[['axis', 'Axis'], ['point', 'Point'], ['ucs', 'UCS']]} drops={['axis', 'point']} />
      </Group>
      <Group w={361} title='Modify' more start={2}>
        <Big name='hole' w={38} lines={['Hole']} />
        <Big name='fillet' w={38} lines={['Fillet']} />
        <Column w={78} items={[['chamfer', 'Chamfer'], ['shell', 'Shell'], ['draft', 'Draft']]} />
        <Column w={112} items={[['thread', 'Thread'], ['combine', 'Combine'], ['thicken', 'Thicken/ Offset']]} />
        <Column w={88} items={[['split', 'Split'], ['direct', 'Direct'], ['delface', 'Delete Face']]} />
      </Group>
      <Group w={56} title='Pattern' start={3}>
        <Grid columns={2} names={['rect', 'mirror', 'circ', null, 'sketchpat']} />
      </Group>
      <Group w={101} title='Create Freeform' start={1}>
        <Big name='box' w={42} lines={['Box']} drop />
        <FaceColumn>
          <SmallButton><Icon name='face' />Face</SmallButton>
          <Framed aria-label='Convert'><Icon name='convertface' /></Framed>
        </FaceColumn>
      </Group>
      <Group w={81} title='Surface' start={3}>
        <Grid columns={3} names={['stitch', 'ruled', 'patch', 'sculpt', 'trim', 'extend', 'replace', 'thickface', 'copyobj']} />
      </Group>
      <Group w={67} title='Simulation'>
        <Big name='stress' w={66} lines={['Stress', 'Analysis']} />
      </Group>
      <Group w={73} title='Convert'>
        <Big name='sheet' w={72} lines={['Convert to', 'Sheet Metal']} />
      </Group>
      <SelectTool aria-label='Selection options'><Icon name='select' /><Caret /></SelectTool>
    </RibbonBar>
  )
}

const nodes = [
  ['bodies', 'Solid Bodies(1)'], ['view', 'View: Master'], ['folder', 'Origin'],
  ['extrusion', 'Extrusion1'], ['extrusion', 'Extrusion2'], ['extrusion', 'Extrusion3'],
  ['mirrorf', 'Mirror1'], ['extrusion', 'Extrusion4'], ['end', 'End of Part']
]

function Browser () {
  return (
    <Panel>
      <PanelClose aria-label='Close panel'>
        <svg width='10' height='10' viewBox='0 0 10 10'><path d='M1.500 1.500l7 7M8.500 1.500l-7 7' stroke='#111' strokeWidth='1.700' /></svg>
      </PanelClose>
      <PanelHead>
        <PanelName>Model<Caret big /></PanelName>
        <button aria-label='Help'><Icon name='qmark' /></button>
      </PanelHead>
      <PanelTools>
        <button aria-label='Filter'><Icon name='filter' /></button>
        <button aria-label='Find'><Icon name='find' /></button>
      </PanelTools>
      <Tree>
        <RootNode><Icon name='part' />Bài 02-1</RootNode>
        {nodes.map(([icon, label]) => (
          <Node key={label}>
            <Expander aria-label={'Expand ' + label}>
              {icon !== 'end' && <svg width='6' height='8' viewBox='0 0 6 8'><path d='M1 .5L4.500 4 1 7.500z' fill='#fff' stroke='#555' /></svg>}
            </Expander>
            <Icon name={icon} />{label}
          </Node>
        ))}
      </Tree>
    </Panel>
  )
}

const outerArc = 'C928 318 912 347 893 372C873 394 850 406 831 405C822 404 815 400 811 395'
const innerArc = 'C890 344 873 364 853 380C838 390 824 394 811 395'
const innerArcBack = 'C824 394 838 390 853 380C873 364 890 344 896 324'

function Part () {
  return (
    <Drawing viewBox='186 140 1180 579' role='img' aria-label='Red part'>
      <defs>
        <linearGradient id='bore' gradientUnits='userSpaceOnUse' x1='835' y1='231' x2='807' y2='279'>
          <stop offset='0' stopColor='#a83030' /><stop offset='.2' stopColor='#b23434' /><stop offset='.48' stopColor='#cb3f3f' /><stop offset='.75' stopColor='#cf2f2f' /><stop offset='1' stopColor='#d42c2c' />
        </linearGradient>
        <linearGradient id='boreEnd' gradientUnits='userSpaceOnUse' x1='850' y1='262' x2='915' y2='300'>
          <stop offset='0' stopColor='#c93030' stopOpacity='0' /><stop offset='1' stopColor='#c63030' stopOpacity='.8' />
        </linearGradient>
        <linearGradient id='lip' gradientUnits='userSpaceOnUse' x1='920' y1='300' x2='815' y2='398'>
          <stop offset='0' stopColor='#c53030' /><stop offset='.25' stopColor='#d22e2e' /><stop offset='.45' stopColor='#f05c5c' /><stop offset='.6' stopColor='#ec4e4e' /><stop offset='.82' stopColor='#e22c2c' /><stop offset='1' stopColor='#d84848' />
        </linearGradient>
        <linearGradient id='lipLeft' gradientUnits='userSpaceOnUse' x1='733' y1='225' x2='684' y2='294'>
          <stop offset='0' stopColor='#d42f2f' /><stop offset='.65' stopColor='#e74545' /><stop offset='1' stopColor='#de2e2e' />
        </linearGradient>
        <linearGradient id='well' gradientUnits='userSpaceOnUse' x1='743' y1='300' x2='880' y2='360'>
          <stop offset='0' stopColor='#a12929' /><stop offset='.08' stopColor='#8b2424' /><stop offset='.2' stopColor='#a82b2b' /><stop offset='.7' stopColor='#a82828' /><stop offset='1' stopColor='#7c1f1f' />
        </linearGradient>
        <linearGradient id='wellSide' x1='0' x2='1'>
          <stop offset='0' stopColor='#cf3434' /><stop offset='.7' stopColor='#c83434' /><stop offset='1' stopColor='#a52c2c' />
        </linearGradient>
        <linearGradient id='backSide' x1='0' x2='1'>
          <stop offset='0' stopColor='#a12a2a' /><stop offset='1' stopColor='#7d2222' />
        </linearGradient>
        <linearGradient id='notchLeft' gradientUnits='userSpaceOnUse' x1='670' y1='425' x2='715' y2='438'>
          <stop offset='0' stopColor='#c43636' /><stop offset='.5' stopColor='#cc3131' /><stop offset='1' stopColor='#8c2525' />
        </linearGradient>
        <linearGradient id='notchRight' gradientUnits='userSpaceOnUse' x1='715' y1='440' x2='771' y2='420'>
          <stop offset='0' stopColor='#7d2222' /><stop offset='.5' stopColor='#9d2828' /><stop offset='1' stopColor='#aa2a2a' />
        </linearGradient>
        <linearGradient id='floor' gradientUnits='userSpaceOnUse' x1='715' y1='470' x2='700' y2='530'>
          <stop offset='0' stopColor='#b32727' /><stop offset='.5' stopColor='#e53030' /><stop offset='1' stopColor='#ea3333' />
        </linearGradient>
        <linearGradient id='shelf' gradientUnits='userSpaceOnUse' x1='535' y1='425' x2='578' y2='438'>
          <stop offset='0' stopColor='#e83232' /><stop offset='1' stopColor='#9f2424' />
        </linearGradient>
        <linearGradient id='shelfRight' gradientUnits='userSpaceOnUse' x1='957' y1='385' x2='980' y2='350'>
          <stop offset='0' stopColor='#a32626' /><stop offset='1' stopColor='#ea3636' />
        </linearGradient>
      </defs>
      <g stroke='#5c1212' strokeWidth='1' strokeLinejoin='round' transform='translate(-.5 0)'>
        <path d='M928 220L900 237L946 264z' fill='#a52c2c' />
        <path d='M928 220L957 288V270L946 264z' fill='#b03030' />
        <path d='M957 288L971 321L957 329z' fill='#b83131' />
        <path d='M957 329L971 321L1028 353L957 394z' fill='url(#shelfRight)' />
        <path d='M969 486L921 513L969 541z' fill='#942424' />
        <path d='M736 174L763 158L819 190L848 174L928 220L900 237L957 270L928 286z' fill='#ea3232' />
        <path d={`M743 237L896 324${innerArc}C804 384 800 374 799 360L743 328z`} fill='url(#well)' />
        <path d='M743 237V329L689 297C715 282 727 256 743 237z' fill='url(#wellSide)' />
        <path d='M736 174C733 220 702 270 673 286L689 297C715 282 727 256 743 237L740 200z' fill='url(#lipLeft)' stroke='none' />
        <path d='M736 174L928 286L896 324L743 237L727 232C733 210 735 195 736 174z' fill='url(#bore)' stroke='none' />
        <path d='M840 230L928 286L896 324L810 275z' fill='url(#boreEnd)' stroke='none' />
        <path d={`M928 286${outerArc}${innerArcBack}z`} fill='url(#lip)' stroke='none' />
        <path d={`M673 286C702 270 733 220 736 174L928 286M689 297C715 282 727 256 743 237L896 324${innerArc}`} fill='none' />
        <path d='M578 265L634 297L606 313L583 393L578 390z' fill='url(#backSide)' />
        <path d='M507 432L578 390L583 393L564 463z' fill='url(#shelf)' />
        <path d='M578 265L606 249L799 360L771 376L715 344L687 360L606 313L634 297z' fill='#ea3232' />
        <path d='M606 313L687 360L644 510L700 543L683 604L489 493L507 432L564 463z' fill='#c93939' />
        <path d='M489 493L683 604V706L489 595z' fill='#a62929' />
        <path d='M715 344L687 360L644 510L715 470z' fill='url(#notchLeft)' />
        <path d='M715 344L771 376V501L715 470z' fill='url(#notchRight)' />
        <path d='M644 510L715 470L771 501L700 543z' fill='url(#floor)' />
        <path d={`M799 360L771 376V501L700 543L683 604V706L759 663V606L969 486V541L1045 497V393L1028 353L957 394V270L928 286${outerArc}C804 384 800 374 799 360z`} fill='#d33131' />
      </g>
      <g strokeWidth='1'>
        <path d='M239 666V650' stroke='#12a52a' /><path d='M239 642l6 11h-12z' fill='#0c9a24' /><ellipse cx='239' cy='653' rx='6' ry='2' fill='#0a7d1c' />
        <path d='M239 666l12-7' stroke='#c7881c' /><path d='M249 653l10 1-3 9-7-4z' fill='#b51414' />
        <path d='M239 666l12 8' stroke='#1a2a8a' /><path d='M249 673l7-4 4 9-11 2z' fill='#1616b4' />
      </g>
      <AxisText x='236' y='641' fill='#3bc04a'>Y</AxisText>
      <AxisText x='260' y='656' fill='#e23c3c'>X</AxisText>
      <AxisText x='260' y='685' fill='#2c2cf0'>Z</AxisText>
    </Drawing>
  )
}

function ViewCube () {
  return (
    <svg width='66' height='70' viewBox='1283 181 66 70' role='img' aria-label='View cube'>
      <g stroke='#ababab' strokeWidth='.8'>
        <path d='M1316 184l29 13-29 14-29-14z' fill='#989898' />
        <path d='M1287 197l29 14v36l-26-19z' fill='#868686' />
        <path d='M1345 197l-29 14v36l27-20z' fill='#8e8e8e' />
      </g>
      <CubeText x='1308' y='203' transform='rotate(-18 1308 203)'>TOP</CubeText>
      <CubeText x='1293' y='222' transform='rotate(24 1293 222)'>LEFT</CubeText>
      <CubeText x='1320' y='232' transform='rotate(-28 1320 232)'>FRONT</CubeText>
    </svg>
  )
}

function Viewport () {
  return (
    <Scene>
      <Part />
      <SceneButtons>
        <button aria-label='Minimize view'><svg width='12' height='12' viewBox='0 0 12 12'><path d='M1 6h10v2.500H1z' fill='#fff' /></svg></button>
        <button aria-label='Restore view'><svg width='12' height='12' viewBox='0 0 12 12'><path d='M4 2h6v7M2 4h6v6H2z' fill='none' stroke='#fff' strokeWidth='1.600' /></svg></button>
        <button aria-label='Close view'><svg width='12' height='12' viewBox='0 0 12 12'><path d='M2 2l8 8M10 2l-8 8' stroke='#fff' strokeWidth='2.400' /></svg></button>
      </SceneButtons>
      <CubeHolder><ViewCube /></CubeHolder>
      <NavBar>
        <NavEdge aria-label='Close navigation'><Icon name='navclose' /></NavEdge>
        <NavButton h={38} aria-label='Full navigation wheel'><Icon name='wheel' /></NavButton>
        <NavCaret />
        <NavRule />
        <NavButton h={26} aria-label='Pan'><Icon name='hand' /></NavButton>
        <NavButton h={24} aria-label='Zoom'><Icon name='zoomwin' /></NavButton>
        <NavCaret />
        <NavButton h={24} aria-label='Orbit'><Icon name='orbit' /></NavButton>
        <NavCaret />
        <NavButton h={26} aria-label='Look at'><Icon name='look' /></NavButton>
        <NavEdge aria-label='Customize navigation'><Icon name='navmore' /></NavEdge>
      </NavBar>
      <Share aria-label='Share'><Icon name='share' /></Share>
    </Scene>
  )
}

function DocumentTabs () {
  return (
    <DocBar>
      {['cascade', 'tiles', 'rowsplit', 'colsplit'].map(name => <Tool key={name} name={name} w={24} />)}
      <Tool name='up' w={24} />
      <DocRule />
      <DocTab>My Home</DocTab>
      <DocTab>Bài 02.ipt</DocTab>
      <DocTab>Bài tập dựng khố...idw</DocTab>
      <OpenTab>
        Bài 02-1.ipt
        <svg width='10' height='10' viewBox='0 0 10 10'><path d='M1 1l8 8M9 1L1 9' stroke='#444' strokeWidth='1.800' /></svg>
      </OpenTab>
    </DocBar>
  )
}

const Window = styled.div`
  display: flex;
  flex-direction: column;
  min-height: 100vh;
`

const Caret = styled.span.withConfig({ shouldForwardProp: p => p !== 'light' && p !== 'big' })`
  flex: none;
  width: 0;
  border: ${props => props.big ? 4 : 3}px solid transparent;
  border-top-color: ${props => props.light ? '#e4e4e4' : '#444'};
  border-bottom: 0;
`

const Slot = styled.button.withConfig({ shouldForwardProp: p => p !== 'w' })`
  display: flex;
  flex: none;
  align-items: center;
  justify-content: center;
  width: ${props => props.w}px;
  height: 22px;
`

const Title = styled.header`
  display: flex;
  align-items: flex-start;
  height: 26px;
  background: #4e4e4e;
  color: #ddd;
`

const Logo = styled.button`
  display: flex;
  flex-direction: column;
  align-items: flex-start;
  width: 28px;
  height: 26px;
  padding-left: 4px;
`

const Pro = styled.span`
  color: #e8842c;
  font-size: 6px;
  font-weight: bold;
  line-height: 6px;
`

const BarRule = styled.i.withConfig({ shouldForwardProp: p => p !== 'thin' })`
  width: 1px;
  height: 22px;
  margin: 0 ${props => props.thin ? 0 : '3px 0 4px'};
  background: #6e6e6e;
`

const Picker = styled.div`
  display: flex;
  align-items: center;
  width: 100px;
  height: 22px;
  padding-right: 3px;
  background: #949494;
  color: #5a5a5a;
`

const PickerSelect = styled.select.withConfig({ shouldForwardProp: p => p !== 'swatch' })`
  flex: 1;
  min-width: 0;
  height: 22px;
  padding: 0 0 0 ${props => props.swatch ? 1 : 6}px;
  border: 0;
  appearance: none;
  background: transparent;
`

const PickerSwatch = styled.span`
  padding-left: 3px;
`

const PickerCaret = styled(Caret)`
  border-width: 4px 4px 0;
  border-top-color: #5a5a5a;
`

const FileName = styled.h1`
  flex: 1;
  margin: 0;
  font-size: 11px;
  font-weight: normal;
  line-height: 22px;
  text-align: center;
`

const Search = styled.input`
  width: 180px;
  height: 20px;
  padding: 0 5px;
  border: 0;
  border-radius: 0;
  background: #8f8f8f;

  &::placeholder { color: #d6d6d6; opacity: 1; }
`

const SignIn = styled.button`
  width: 83px;
  height: 22px;
  padding-left: 1px;
  text-align: left;
`

const WindowButtons = styled.div`
  display: flex;
  margin-left: 18px;
`

const Tabs = styled.nav`
  display: flex;
  align-items: center;
  height: 20px;
  background: #4e4e4e;
  color: #ddd;
`

const Tab = styled.button`
  height: 20px;
  padding: 0 11px 2px 10px;
  white-space: nowrap;
`

const FileTab = styled(Tab)`
  width: 44px;
  margin-right: 3px;
  background: #f58220;
  color: #fff;
`

const ActiveTab = styled(Tab)`
  width: 69px;
  padding: 0 0 2px;
  background: #f5f5f5;
  color: #555;
`

const CollapseButton = styled.button`
  display: flex;
  align-items: center;
  gap: 4px;
  height: 20px;
  padding-left: 18px;
`

const RibbonBar = styled.section`
  display: flex;
  height: 94px;
  background: #f5f5f5;
`

const RibbonGroup = styled.div.withConfig({ shouldForwardProp: p => p !== 'w' })`
  display: flex;
  flex: none;
  flex-direction: column;
  width: ${props => props.w}px;
  border-right: 1px solid #dcdcdc;
`

const GroupBody = styled.div.withConfig({ shouldForwardProp: p => p !== 'start' })`
  display: flex;
  position: relative;
  height: 75px;
  padding: 3px 0 0 ${props => props.start || 0}px;
`

const GroupTitle = styled.div`
  display: flex;
  align-items: center;
  justify-content: center;
  gap: 6px;
  height: 19px;
  white-space: nowrap;
`

const BigButton = styled.button.withConfig({ shouldForwardProp: p => p !== 'w' })`
  display: flex;
  flex: none;
  flex-direction: column;
  align-items: center;
  width: ${props => props.w}px;
  height: 72px;
  line-height: 15px;
  white-space: nowrap;
`

const BigIcon = styled.span`
  display: flex;
  align-items: center;
  height: 38px;
`

const BigCaret = styled(Caret)`
  margin-top: 4px;
`

const SketchCaret = styled(Caret)`
  position: absolute;
  right: 4px;
  bottom: 16px;
`

const ToolColumn = styled.div.withConfig({ shouldForwardProp: p => p !== 'w' })`
  flex: none;
  width: ${props => props.w}px;
  padding-left: 4px;
`

const SmallButton = styled.button`
  display: flex;
  align-items: center;
  gap: 3px;
  height: 24px;
  padding-bottom: 2px;
  white-space: nowrap;
`

const SmallCaret = styled(Caret)`
  margin-left: 5px;
`

const FaceColumn = styled.div`
  display: flex;
  flex-direction: column;
  align-items: flex-start;
  padding-left: 4px;
`

const IconGrid = styled.div.withConfig({ shouldForwardProp: p => p !== 'columns' })`
  display: grid;
  grid-template-columns: repeat(${props => props.columns}, 24px);
  grid-auto-rows: 22px;
  gap: 2px 1px;
  align-content: start;
  padding-top: 1px;
`

const Framed = styled.button`
  display: flex;
  align-items: center;
  justify-content: center;
  width: 24px;
  height: 22px;
  border: 1px solid #c8d0d8;
`

const SelectTool = styled.button`
  display: flex;
  align-items: center;
  gap: 6px;
  width: 35px;
  height: 22px;
  margin: 4px 0 0 3px;
  padding-left: 2px;
  border: 1px solid #c9c9c9;
`

const Workspace = styled.main`
  display: flex;
  flex: 1;
`

const Panel = styled.aside`
  display: flex;
  flex: none;
  flex-direction: column;
  width: 186px;
  border-top: 1px solid #888;
  border-bottom: 2px solid #a5a5a5;
`

const PanelClose = styled.button`
  align-self: flex-end;
  height: 14px;
  padding-right: 4px;
`

const PanelHead = styled.div`
  display: flex;
  align-items: center;
  justify-content: space-between;
  height: 22px;
  padding: 0 4px 0 11px;
`

const PanelName = styled.button`
  display: flex;
  align-items: center;
  gap: 4px;
  color: #555;
  font-size: 12px;
  font-weight: bold;
`

const PanelTools = styled.div`
  display: flex;
  align-items: flex-start;
  gap: 8px;
  height: 26px;
  padding: 3px 6px;
`

const Tree = styled.ul`
  flex: 1;
  margin: 0 2px;
  border-top: 1px solid #cfcfcf;
  background: #fff;
  color: #111;
  font-family: 'DejaVu Sans Condensed', 'DejaVu Sans', sans-serif;
`

const Node = styled.li`
  display: flex;
  align-items: center;
  gap: 2px;
  height: 18px;
  padding-left: 8px;
`

const RootNode = styled(Node)`
  padding-left: 13px;
`

const Expander = styled.button`
  width: 12px;
`

const Documents = styled.div`
  display: flex;
  flex: 1;
  flex-direction: column;
  min-width: 0;
`

const Scene = styled.div`
  display: flex;
  flex: 1;
  position: relative;
  min-height: 0;
  background: linear-gradient(#303030, #a4a4a4);
`

const Drawing = styled.svg`
  flex: 1;
  width: 100%;
  min-width: 0;
`

const AxisText = styled.text`
  font: bold 10px 'Liberation Sans', sans-serif;
`

const CubeText = styled.text`
  fill: #555;
  font: 8px 'Liberation Sans', sans-serif;
`

const SceneButtons = styled.div`
  display: flex;
  position: absolute;
  top: 6px;
  right: 2px;
  gap: 8px;
`

const CubeHolder = styled.div`
  position: absolute;
  top: 41px;
  right: 17px;
`

const NavBar = styled.div`
  display: flex;
  flex-direction: column;
  align-items: center;
  position: absolute;
  top: 122px;
  right: 1px;
  width: 34px;
  padding: 1px 0;
  border: 2px solid #4a4a4a;
  border-radius: 5px;
  background: #a0a0a0;
`

const NavEdge = styled.button`
  align-self: flex-end;
  height: 12px;
`

const NavButton = styled.button.withConfig({ shouldForwardProp: p => p !== 'h' })`
  display: flex;
  align-items: center;
  height: ${props => props.h}px;
`

const NavCaret = styled(Caret)`
  margin: 3px 0 4px;
`

const NavRule = styled.i`
  width: 24px;
  height: 1px;
  background: #555;
`

const Share = styled.button`
  display: flex;
  align-items: center;
  justify-content: center;
  position: absolute;
  right: 1px;
  bottom: 31px;
  width: 46px;
  height: 47px;
  background: #fff;
`

const DocBar = styled.nav`
  display: flex;
  align-items: center;
  height: 24px;
  background: #555;
  color: #ddd;
`

const DocRule = styled.i`
  width: 1px;
  height: 24px;
  background: #888;
`

const DocTab = styled.button`
  height: 24px;
  padding: 0 11px 0 9px;
  white-space: nowrap;
`

const OpenTab = styled(DocTab)`
  display: flex;
  align-items: center;
  gap: 7px;
  margin-left: 3px;
  background: #f5f5f5;
  color: #444;
`

const StatusBar = styled.footer`
  display: flex;
  height: 25px;
  border-bottom: 2px solid #3a3f3a;
  background: #f5f5f5;
  color: #111;
  line-height: 26px;
`

const StatusText = styled.span`
  flex: 1;
  padding-left: 1px;
`

const StatusCell = styled.span`
  width: 40px;
  padding-left: 10px;
  border-left: 1px solid #c4c4c4;
`

export default App
